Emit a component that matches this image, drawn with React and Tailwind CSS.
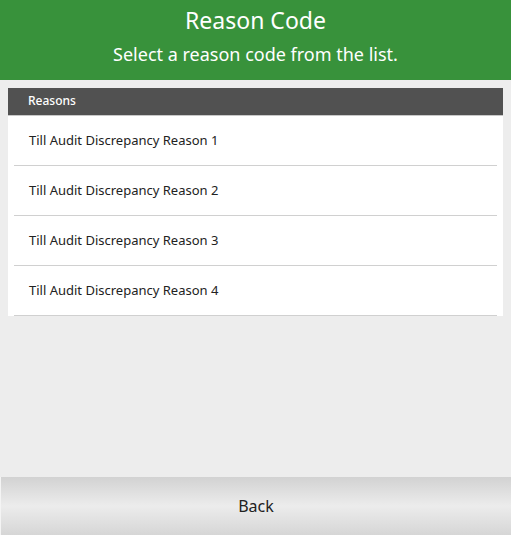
const reasons = [
  'Till Audit Discrepancy Reason 1',
  'Till Audit Discrepancy Reason 2',
  'Till Audit Discrepancy Reason 3',
  'Till Audit Discrepancy Reason 4',
]

export default function App() {
  return (
    <div
      className="flex h-[535px] w-[511px] flex-col bg-[#ededed]"
      style={{ fontFamily: '"Noto Sans", "Open Sans", sans-serif' }}
    >
      <header className="flex h-[80px] flex-col items-center bg-[#38923b] pt-[4px] text-white">
        <h1 className="text-[23px] leading-[32px]">Reason Code</h1>
        <p className="mt-[4px] text-[18px] leading-[28px]">Select a reason code from the list.</p>
      </header>

      <div className="mx-[8px] mt-[8px] bg-white">
        <div className="h-[28px] border-b border-[#c8c8c8] bg-[#515151] pl-[20px] text-[12px] leading-[26px] font-medium text-white">
          Reasons
        </div>
        <ul>
          {reasons.map((r) => (
            <li key={r} className="mx-[6px] h-[50px] border-b border-[#d0d0d0] pl-[15px] text-[13px] leading-[49px] text-[#222]">
              {r}
            </li>
          ))}
        </ul>
      </div>

      <div className="flex-1" />

      <button className="h-[58px] w-full border-l border-[#f4f4f4] bg-linear-to-b from-[#d2d2d2] via-[#ececec] to-[#d6d6d6] text-[16px] text-[#222]">
        Back
      </button>
    </div>
  )
}
